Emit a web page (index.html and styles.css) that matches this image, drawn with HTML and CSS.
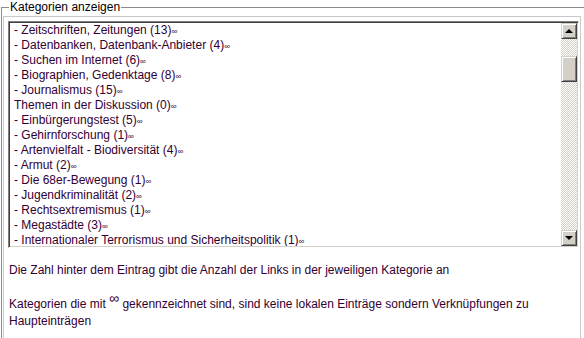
FILE: index.html
```html
<!DOCTYPE html>
<html lang="de">
<head>
    <meta charset="UTF-8">
    <title>Kategorien anzeigen</title>
    <link rel="stylesheet" href="styles.css">
</head>
<body>
    <fieldset class="cats">
        <legend>Kategorien anzeigen</legend>
        <div class="box">
            <div class="listbox">
                <ul class="options">
                    <li>- Zeitschriften, Zeitungen (13)<span class="inf">∞</span></li>
                    <li>- Datenbanken, Datenbank-Anbieter (4)<span class="inf">∞</span></li>
                    <li>- Suchen im Internet (6)<span class="inf">∞</span></li>
                    <li>- Biographien, Gedenktage (8)<span class="inf">∞</span></li>
                    <li>- Journalismus (15)<span class="inf">∞</span></li>
                    <li>Themen in der Diskussion (0)<span class="inf">∞</span></li>
                    <li>- Einbürgerungstest (5)<span class="inf">∞</span></li>
                    <li>- Gehirnforschung (1)<span class="inf">∞</span></li>
                    <li>- Artenvielfalt - Biodiversität (4)<span class="inf">∞</span></li>
                    <li>- Armut (2)<span class="inf">∞</span></li>
                    <li>- Die 68er-Bewegung (1)<span class="inf">∞</span></li>
                    <li>- Jugendkriminalität (2)<span class="inf">∞</span></li>
                    <li>- Rechtsextremismus (1)<span class="inf">∞</span></li>
                    <li>- Megastädte (3)<span class="inf">∞</span></li>
                    <li>- Internationaler Terrorismus und Sicherheitspolitik (1)<span class="inf">∞</span></li>
                </ul>
                <div class="scrollbar">
                    <div class="sb-btn"><span class="arrow up"></span></div>
                    <div class="sb-track"><div class="sb-thumb"></div></div>
                    <div class="sb-btn"><span class="arrow down"></span></div>
                </div>
            </div>
            <p class="note">Die Zahl hinter dem Eintrag gibt die Anzahl der Links in der jeweiligen Kategorie an</p>
            <p class="note second">Kategorien die mit <sup class="inf-big">∞</sup> gekennzeichnet sind, sind keine lokalen Einträge sondern Verknüpfungen zu Haupteinträgen</p>
        </div>
    </fieldset>
</body>
</html>
```

FILE: styles.css
```css
* {
    box-sizing: border-box;
}

body {
    margin: 0;
    background-color: white;
    font-family: "Liberation Sans", Arial, sans-serif;
    font-size: 12px;
    overflow: hidden;
}

.cats {
    margin: 0 -1px 0 1px;
    padding: 2px 3px 0 1px;
    border: 1px solid #8c8c8c;
    min-width: 0;
}

.cats legend {
    margin-left: 6px;
    padding: 0 1px;
    color: black;
    font-size: 12px;
    line-height: 14px;
}

.box {
    border: 1px solid #c8c8c8;
    padding: 4px 1px 0 4px;
    height: 340px;
}

.listbox {
    display: flex;
    height: 227px;
    border: 1px solid;
    border-color: #808080 #ffffff #ffffff #808080;
    box-shadow: inset 1px 1px 0 #404040, inset -1px -1px 0 #d4d0c8;
    padding: 1px;
    background-color: white;
}

.options {
    flex-grow: 1;
    list-style: none;
    margin: 0;
    padding: 0 0 0 4px;
    overflow: hidden;
    color: #330033;
    line-height: 15px;
}

.options li {
    white-space: nowrap;
    height: 15px;
}

.inf {
    font-size: 8px;
    line-height: 1;
}

.scrollbar {
    width: 16px;
    display: flex;
    flex-direction: column;
}

.sb-btn,
.sb-thumb {
    background-color: #d4d0c8;
    border: 1px solid;
    border-color: #d4d0c8 #404040 #404040 #d4d0c8;
    box-shadow: inset 1px 1px 0 #ffffff, inset -1px -1px 0 #808080;
}

.sb-btn {
    height: 16px;
    display: flex;
    align-items: center;
    justify-content: center;
}

.arrow {
    width: 0;
    height: 0;
    border-left: 4px solid transparent;
    border-right: 4px solid transparent;
}

.arrow.up {
    border-bottom: 4px solid black;
}

.arrow.down {
    border-top: 4px solid black;
}

.sb-track {
    flex-grow: 1;
    background: repeating-conic-gradient(#d4d0c8 0 25%, #ffffff 0 50%) 0 0 / 2px 2px;
}

.sb-thumb {
    margin-top: 17px;
    height: 26px;
}

.note {
    margin: 0;
    padding: 14px 20px 0 1px;
    color: #330033;
    line-height: 16px;
}

.note.second {
    padding-top: 18px;
    line-height: 17px;
}

.inf-big {
    font-size: 14px;
    line-height: 0;
}
```
